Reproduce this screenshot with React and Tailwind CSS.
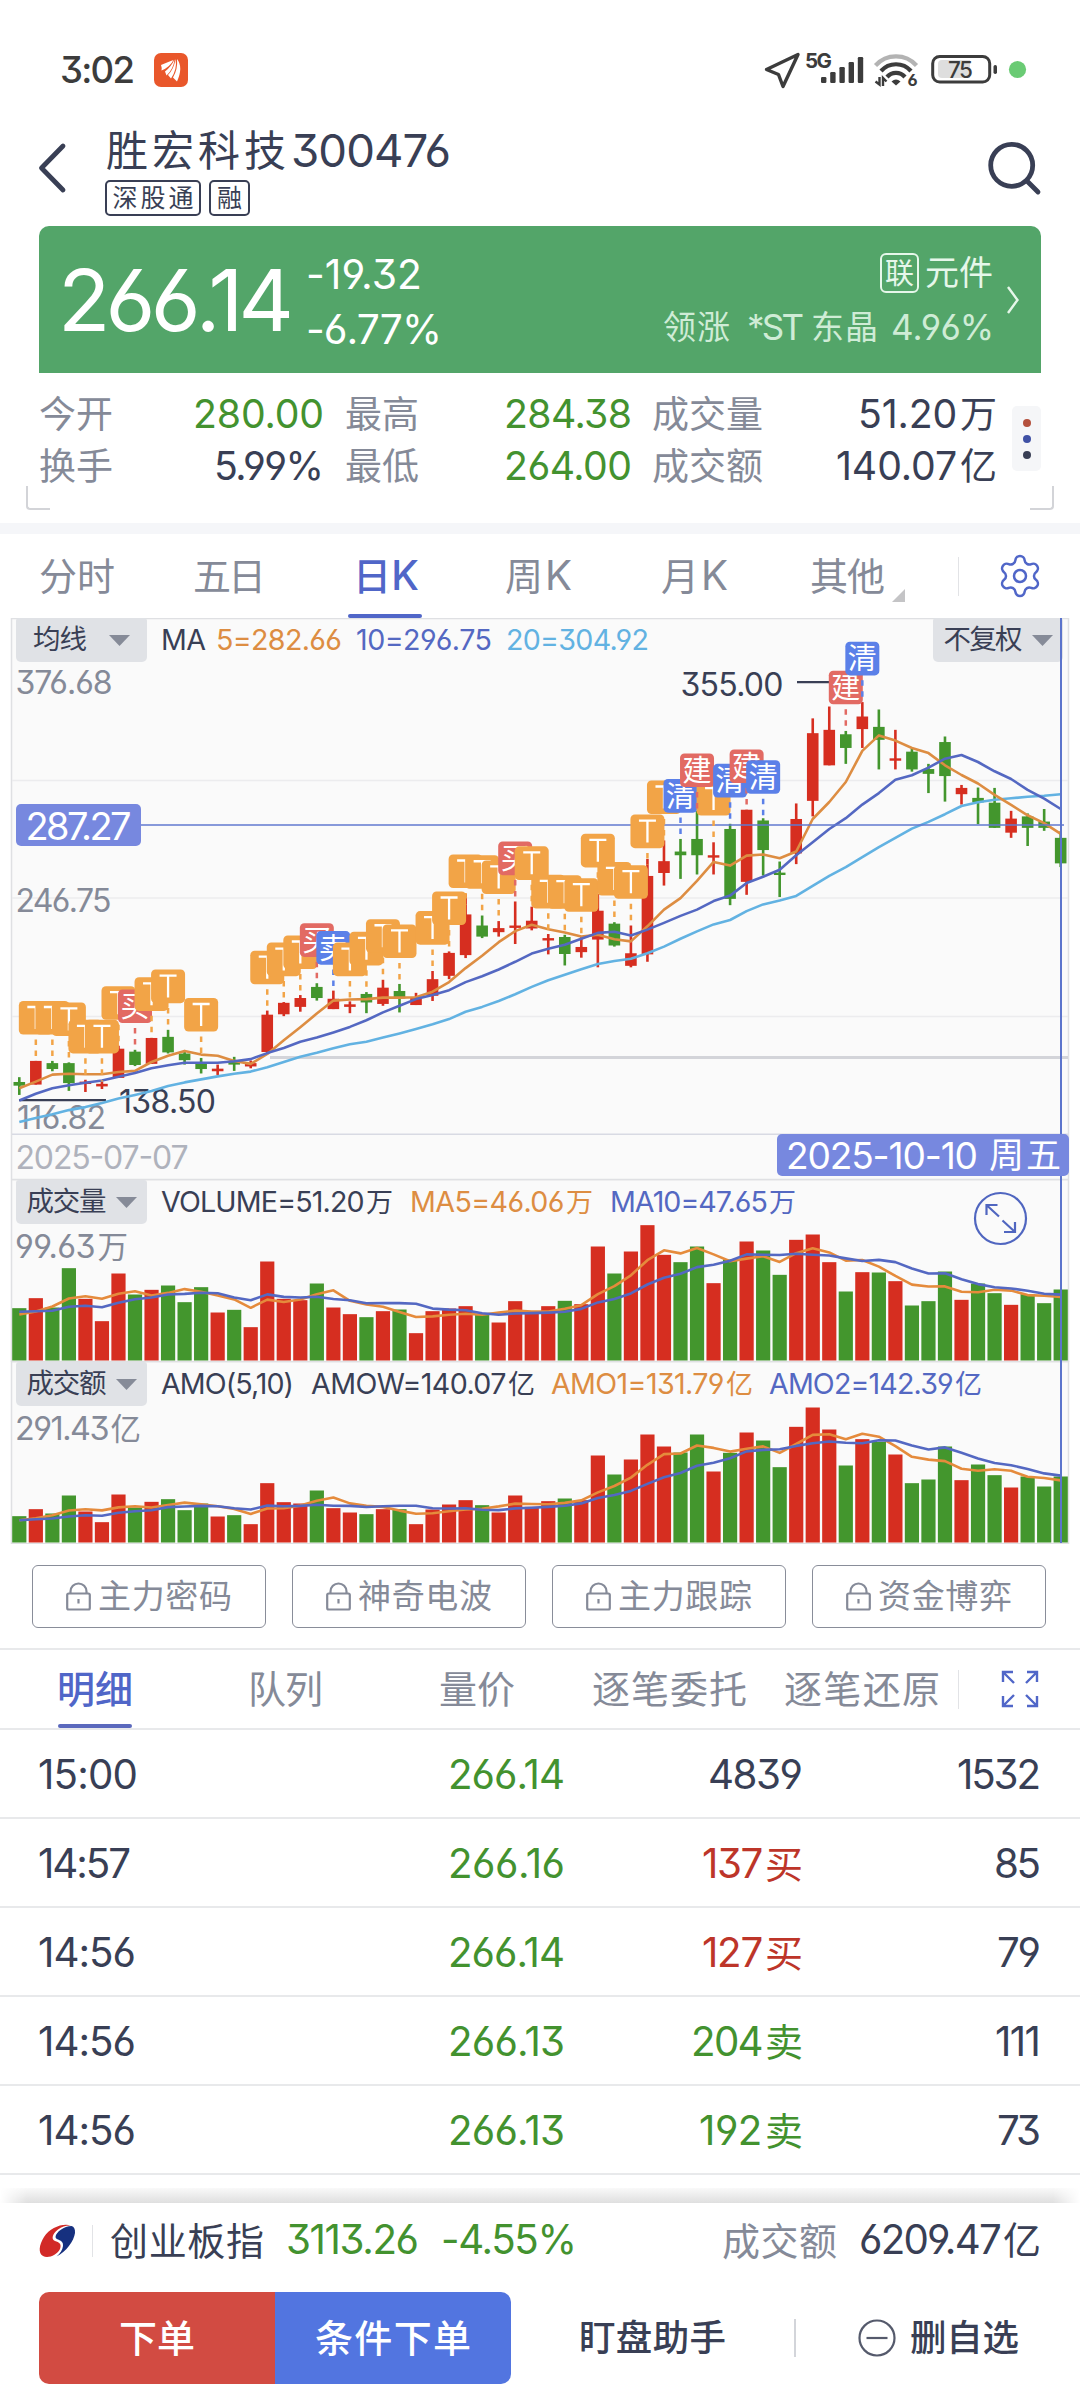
import React, { useLayoutEffect, useRef, useState } from "react";
import { Settings } from "lucide-react";

const RED = "#d62e20";
const GREEN = "#43962d";
const INK = "#393f55";
const ORANGE = "#dd8d42";
const BLUE = "#5468c2";
const CYAN = "#62b2e2";

/* Text whose letter spacing is adjusted so that it fills the given width. */
function T({ w, className = "", children }) {
  const ref = useRef(null);
  const [ls, setLs] = useState(null);
  const text = String(children);
  useLayoutEffect(() => {
    const natural = ref.current.getBoundingClientRect().width;
    setLs((w - natural) / Math.max(1, text.length - 1));
  }, []);
  const runs = text.split(/([\u4e00-\u9fff]+)/).filter(Boolean);
  return (
    <span className={"inline-block shrink-0 whitespace-nowrap leading-none " + className} style={{ width: w }}>
      <span ref={ref} className="inline-block whitespace-pre" style={ls === null ? undefined : { letterSpacing: ls }}>
        {runs.map((r, i) => (
          <span
            key={i}
            className={(/[\u4e00-\u9fff]/.test(r) ? "" : "text-[1.06em] ") + (i > 0 ? "ml-[0.08em]" : "")}
          >
            {r}
          </span>
        ))}
      </span>
    </span>
  );
}

/* [isUp, bodyTop, bodyBottom, high, low] */
const CANDLES = [
  [0, 1303, 1313, 1290, 1338], [1, 1246, 1310, 1246, 1310], [0, 1252, 1268, 1246, 1274], [0, 1252, 1306, 1250, 1327],
  [1, 1302, 1306, 1297, 1330], [1, 1308, 1315, 1302, 1322], [1, 1213, 1292, 1205, 1292], [0, 1221, 1257, 1216, 1260],
  [1, 1184, 1254, 1184, 1254], [0, 1181, 1223, 1162, 1226], [0, 1226, 1244, 1218, 1256], [0, 1253, 1268, 1238, 1280],
  [1, 1267, 1274, 1256, 1284], [0, 1249, 1256, 1235, 1273], [1, 1252, 1261, 1245, 1266], [1, 1121, 1222, 1110, 1226],
  [1, 1089, 1120, 1087, 1125], [1, 1076, 1100, 1068, 1113], [0, 1046, 1076, 1036, 1083], [1, 1078, 1106, 1056, 1106],
  [1, 1093, 1100, 1085, 1117], [0, 1065, 1088, 1060, 1117], [1, 1048, 1092, 1027, 1097], [0, 1057, 1077, 1038, 1115],
  [1, 1075, 1095, 1062, 1095], [1, 1025, 1070, 1003, 1084], [1, 954, 1016, 950, 1025], [1, 850, 960, 795, 968],
  [0, 880, 910, 853, 914], [1, 887, 898, 868, 910], [1, 880, 886, 815, 930], [1, 867, 888, 829, 893],
  [1, 914, 920, 903, 958], [0, 911, 957, 905, 988], [1, 938, 952, 910, 967], [1, 840, 918, 795, 993],
  [0, 875, 934, 871, 937], [1, 955, 989, 880, 993], [1, 746, 958, 700, 978], [1, 706, 738, 650, 772],
  [0, 680, 690, 646, 754], [0, 646, 690, 570, 742], [1, 690, 696, 655, 742], [0, 619, 808, 605, 825],
  [1, 567, 762, 567, 797], [0, 596, 676, 590, 745], [0, 737, 743, 707, 803], [1, 592, 685, 550, 714],
  [1, 360, 543, 320, 585], [1, 351, 447, 288, 447], [0, 363, 400, 354, 443], [1, 315, 349, 276, 400],
  [0, 343, 378, 296, 458], [1, 428, 434, 351, 458], [0, 410, 458, 402, 464], [0, 457, 470, 443, 522],
  [0, 384, 476, 369, 545], [1, 508, 525, 500, 553], [0, 535, 547, 507, 606], [0, 548, 616, 508, 616],
  [1, 591, 629, 570, 643], [0, 585, 616, 577, 665], [0, 599, 616, 565, 624], [0, 643, 712, 625, 722],
];
const MA5 = [1320, 1302, 1283, 1281, 1282, 1282, 1276, 1273, 1249, 1232, 1219, 1229, 1232, 1246, 1254, 1227, 1190, 1155, 1118, 1083, 1080, 1079, 1075, 1075, 1074, 1059, 1033, 995, 962, 925, 895, 878, 890, 899, 910, 905, 917, 923, 882, 837, 806, 759, 708, 718, 691, 688, 698, 680, 592, 546, 492, 408, 366, 380, 400, 414, 447, 473, 496, 527, 554, 582, 603, 632];
const MA10 = [1353, 1335, 1320, 1312, 1305, 1299, 1289, 1279, 1266, 1258, 1251, 1251, 1251, 1247, 1241, 1225, 1211, 1194, 1183, 1169, 1154, 1136, 1115, 1097, 1079, 1068, 1055, 1033, 1017, 999, 978, 956, 943, 932, 916, 900, 897, 907, 891, 873, 854, 837, 814, 799, 765, 748, 729, 690, 655, 619, 590, 553, 522, 486, 474, 453, 429, 419, 438, 463, 484, 513, 537, 565];
const MA20 = [1411, 1400, 1390, 1379, 1371, 1360, 1348, 1338, 1327, 1314, 1304, 1296, 1288, 1281, 1275, 1263, 1249, 1235, 1224, 1212, 1201, 1194, 1183, 1172, 1160, 1147, 1133, 1113, 1100, 1084, 1066, 1046, 1028, 1013, 998, 984, 976, 970, 955, 937, 916, 896, 877, 865, 841, 823, 812, 800, 773, 746, 722, 695, 668, 643, 618, 600, 579, 557, 547, 540, 536, 532, 529, 525];
const MARKERS = [
  [1, "T", 1084], [2, "T", 1084], [3, "T", 1088], [4, "T", 1135], [5, "T", 1135], [6, "T", 1044], [7, "买", 1053],
  [8, "T", 1020], [9, "T", 999], [11, "T", 1076], [15, "T", 948], [16, "T", 926], [17, "T", 907], [18, "买", 874],
  [19, "卖", 895], [20, "T", 926], [21, "T", 897], [22, "T", 863], [23, "T", 877], [25, "T", 841], [26, "T", 788],
  [27, "T", 688], [28, "T", 690], [29, "T", 704], [30, "买", 653], [31, "T", 666], [32, "T", 743], [33, "T", 744],
  [34, "T", 752], [35, "T", 632], [36, "T", 708], [37, "T", 717], [38, "T", 580], [39, "T", 488], [40, "清", 484],
  [42, "T", 492], [41, "建", 415], [43, "清", 443], [44, "建", 404], [45, "清", 433], [50, "建", 191], [51, "清", 113],
];
const MARK_COLOR = { T: "#f2a447", 买: "#e26a63", 建: "#e26a63", 卖: "#5b80e8", 清: "#5b80e8" };

const VOL = [414, 384, 412, 294, 386, 453, 310, 373, 359, 346, 396, 351, 427, 419, 471, 274, 386, 390, 340, 412, 432, 441, 423, 418, 489, 423, 415, 408, 433, 457, 393, 430, 408, 392, 402, 229, 310, 244, 165, 254, 276, 229, 339, 268, 214, 241, 314, 209, 193, 276, 364, 306, 307, 333, 406, 393, 304, 389, 340, 369, 404, 372, 399, 358].map((v) => (571 - v) / 3);
const AMO = [1038, 1017, 1030, 976, 1024, 1056, 973, 1012, 995, 987, 1020, 1000, 1039, 1035, 1062, 939, 996, 1000, 961, 1014, 1027, 1032, 1017, 1017, 1062, 1018, 1003, 990, 1005, 1027, 976, 1010, 993, 985, 990, 856, 913, 868, 793, 829, 847, 793, 904, 848, 787, 811, 891, 770, 712, 778, 886, 807, 815, 853, 939, 928, 829, 930, 883, 915, 952, 919, 949, 919].map((v) => (1117 - v) / 3);
const VOL5 = [46, 49, 54, 62];
const VOL10 = [48.7, 49.3, 49.7, 53.7, 54.7, 53.3, 57.7, 61.3, 63];
const AMO5 = [22.3, 24.3, 27.3, 32];
const AMO10 = [22.3, 23.3, 24, 26, 27.3, 26.7, 29.7, 31.3, 32.3];

const cx = (i) => 19.3 + 16.53 * i;
/* chart units to pixels inside the price panel */
const py = (v) => v / 2.7034 - 18;
const linePoints = (vals, f) => vals.map((v, i) => `${cx(i).toFixed(1)},${f(v).toFixed(1)}`).join(" ");
const average = (vals, n, head) =>
  vals.map((_, i) => (i < head.length ? head[i] : vals.slice(i - n + 1, i + 1).reduce((a, b) => a + b, 0) / n));

function Drop({ w, tw, gap, children }) {
  return (
    <div className="flex h-[44px] items-center justify-center rounded-b-[5px] rounded-t-[3px] bg-[#e0e2e6] text-[27.5px] text-[#393f55]" style={{ width: w, gap }}>
      <T w={tw}>{children}</T>
      <svg width="21" height="11" viewBox="0 0 21 11"><path d="M0 0H21L10.5 11Z" fill="#868b98" /></svg>
    </div>
  );
}

function Label({ x, y, w, size = 32, fill = "#858a98", children }) {
  return (
    <text x={x} y={y} textLength={w} fontSize={size} fill={fill}>{children}</text>
  );
}

function PricePanel() {
  return (
    <section className="relative h-[561px]">
      <svg className="absolute inset-0" width="1080" height="561" viewBox="0 0 1080 561">
        <rect x="11.5" y="0.5" width="1057" height="561" fill="#fafafa" stroke="#dfe0e3" strokeWidth="1.5" />
        {[162.5, 280, 398.5].map((y) => <path key={y} d={`M12 ${y}H1068`} stroke="#ececee" strokeWidth="1.5" />)}
        <path d="M270 439.5H1068" stroke="#d3d4d9" strokeWidth="3" />
        <path d="M12 516.2H1068" stroke="#d8dae3" strokeWidth="1.5" />
        {CANDLES.map(([up, t, b, h, l], i) => {
          const c = up ? RED : GREEN;
          return (
            <g key={i} fill={c}>
              <rect x={cx(i) - 1.3} y={py(h)} width="2.6" height={py(l) - py(h)} />
              <rect x={cx(i) - 5.8} y={py(t)} width="11.6" height={Math.max(2.4, py(b) - py(t))} />
            </g>
          );
        })}
        <path d={`M19 ${py(1352)}H106`} stroke={INK} strokeWidth="2.3" />
        <path d={`M797 ${py(222)}H830`} stroke={INK} strokeWidth="2.3" />
        <Label x="15.5" y="75.5" w="97">376.68</Label>
        <Label x="15.5" y="293.5" w="96">246.75</Label>
        <Label x="17" y="511" w="89">116.82</Label>
        <Label x="119" y="495" w="97" fill={INK}>138.50</Label>
        <Label x="680.5" y="77.5" w="103" fill={INK}>355.00</Label>
        <Label x="15.5" y="551" w="173" fill="#afb2bc">2025-07-07</Label>
        <g fill="none" strokeWidth="2.6" strokeLinejoin="round">
          <polyline points={linePoints(MA20, py)} stroke={CYAN} />
          <polyline points={linePoints(MA5, py)} stroke={ORANGE} />
          <polyline points={linePoints(MA10, py)} stroke={BLUE} />
        </g>
        <path d="M16 207H1064" stroke="#6079cf" strokeWidth="1.6" />
        {MARKERS.map(([i, s, t]) => {
          const c = MARK_COLOR[s];
          const y = py(t);
          return (
            <g key={i}>
              <path d={`M${cx(i)} ${y + 38.5}V${Math.max(y + 50, py(CANDLES[i][3]))}`} stroke={c} strokeWidth="2.5" strokeDasharray="5.5 5.5" />
              <rect x={cx(i) - 17} y={y} width="34" height="33.6" rx="4.5" fill={c} />
              {s === "T" ? (
                <path d={`M${cx(i) - 8.5} ${y + 6}H${cx(i) + 8.5}M${cx(i)} ${y + 6}V${y + 28}`} stroke="#fff" strokeWidth="2.3" fill="none" />
              ) : (
                <text x={cx(i)} y={y + 27.5} fontSize="29" textAnchor="middle" fill="#fff">{s}</text>
              )}
            </g>
          );
        })}
        <rect x="16" y="186" width="125" height="42" rx="5" fill="#7788df" />
        <Label x="25.5" y="221.5" w="106" size={38} fill="#fff">287.27</Label>
      </svg>
      <div className="relative flex items-center pl-[16px] pr-[17px] text-[27px]">
        <Drop w={131} tw={54} gap={22}>均线</Drop>
        <T w={45} className="ml-[14px] text-[#393f55]">MA</T>
        <T w={126} className="ml-[10px] text-[#dd8d42]">5=282.66</T>
        <T w={136} className="ml-[14px] text-[#5468c2]">10=296.75</T>
        <T w={143} className="ml-[14px] text-[#62b2e2]">20=304.92</T>
        <div className="ml-auto"><Drop w={130} tw={79} gap={9}>不复权</Drop></div>
      </div>
    </section>
  );
}

function BarPanel({ values, head5, head10, header, label, labelWidth }) {
  const f = (v) => 181.5 - v;
  return (
    <section className="relative h-[182px]">
      <svg className="absolute inset-0" width="1080" height="183" viewBox="0 0 1080 183">
        <rect x="11.5" y="0.7" width="1057" height="182" fill="#fafafa" stroke="#dfe0e3" strokeWidth="1.5" />
        {values.map((v, i) => (
          <rect key={i} x={cx(i) - 7.1} y={f(v)} width="14.2" height={v} fill={CANDLES[i][0] ? RED : GREEN} />
        ))}
        <g fill="none" strokeWidth="2.6" strokeLinejoin="round">
          <polyline points={linePoints(average(values, 5, head5), f)} stroke="#e58b3c" />
          <polyline points={linePoints(average(values, 10, head10), f)} stroke={BLUE} />
        </g>
      </svg>
      <div className="relative flex items-center pl-[16px] pt-[1px] text-[27px]">{header}</div>
      <div className="relative flex h-[44px] items-center pl-[15px] pt-[2px] text-[30.5px] text-[#858a98]">
        <T w={labelWidth}>{label}</T>
      </div>
    </section>
  );
}

function StatusIcons() {
  return (
    <svg width="270" height="44" viewBox="760 48 270 44" className="ml-auto mr-[50px]">
      <path d="M766.5 69.5 798 54.5 783 86.5 778.5 74.5Z" fill="none" stroke="#3c3c3c" strokeWidth="3.4" strokeLinejoin="round" />
      <text x="805" y="68" fontSize="20.5" fontWeight="700" fill="#3c3c3c" textLength="27">5G</text>
      {[6, 11, 16, 21, 26].map((h, i) => (
        <rect key={h} x={821 + i * 9.2} y={83 - h} width="5.4" height={h} rx="1.2" fill="#3c3c3c" />
      ))}
      <g fill="none" strokeWidth="4.2">
        <path d="M875.5 65.5A27.5 27.5 0 0 1 916.5 65.5" stroke="#b3b3b3" />
        <path d="M881 71A20 20 0 0 1 911 71" stroke="#3c3c3c" />
        <path d="M887 77A12 12 0 0 1 905 77" stroke="#3c3c3c" />
      </g>
      <path d="M891.5 81.5Q896 77.500 900.5 81.5L896 85.5Z" fill="#3c3c3c" />
      <path d="M879.5 77V84.5L875.5 81.5M883 86V78L886.5 81.5" fill="none" stroke="#3c3c3c" strokeWidth="2.4" />
      <text x="907.5" y="86" fontSize="16.5" fontWeight="700" fill="#3c3c3c">6</text>
      <rect x="932.7" y="56.5" width="57" height="25.5" rx="7" fill="#fff" stroke="#3c3c3c" strokeWidth="3" />
      <path d="M942 60H970V78H942Q938 78 938 74V64Q938 60 942 60Z" fill="#dedede" />
      <text x="948" y="77.5" fontSize="22.5" fontWeight="500" fill="#3c3c3c" textLength="25">75</text>
      <rect x="993.5" y="65" width="3.5" height="9" rx="1.7" fill="#3c3c3c" />
      <circle cx="1017.5" cy="69.5" r="8.6" fill="#6acb74" />
    </svg>
  );
}

function Stat({ label, lw, value, vw, green }) {
  return (
    <div className="flex h-[52px] items-center justify-between">
      <T w={lw} className="text-[#858a98]">{label}</T>
      <T w={vw} className={green ? "text-[#43922f]" : "text-[#393f55]"}>{value}</T>
    </div>
  );
}

function Lock() {
  return (
    <svg width="25" height="29" viewBox="0 0 25 29" fill="none" stroke="#858a98" strokeWidth="2.2">
      <rect x="1.2" y="11.5" width="22.6" height="16" rx="1.5" />
      <path d="M4.5 11.5V9.5A8 8 0 0 1 20.5 9.5V11.5M12.5 17V21.5" />
    </svg>
  );
}

const TRADES = [
  ["15:00", 100, "266.14", 117, "4839", 95, "1532", 84, "text-[#393f55]"],
  ["14:57", 93, "266.16", 117, "137买", 101, "85", 47, "text-[#bd3529]"],
  ["14:56", 98, "266.14", 117, "127买", 101, "79", 44, "text-[#bd3529]"],
  ["14:56", 98, "266.13", 117, "204卖", 112, "111", 46, "text-[#43922f]"],
  ["14:56", 98, "266.13", 117, "192卖", 104, "73", 44, "text-[#43922f]"],
];

export default function App() {
  return (
    <div
      className="relative h-[2400px] w-[1080px] overflow-hidden bg-white text-[#393f55] [font-feature-settings:'cv03','cv04','cv09']"
      style={{ fontFamily: '"Inter", "Noto Sans CJK SC", sans-serif' }}
    >
      <div className="flex h-[100px] items-center pl-[60px] pt-[40px]">
        <T w={75} className="text-[34.5px] font-medium text-[#3c3c3c]">3:02</T>
        <svg width="34" height="34" viewBox="0 0 34 34" className="ml-[19px]">
          <rect width="34" height="34" rx="7" fill="#e9572b" />
          <path d="M7 12Q14 9 19.5 7Q16 14 7.5 17.5Q8 14.5 7 12Z M20.5 6.5Q19.5 16 12.5 22.5L11 18.5Q17 14 20.5 6.5Z M21.5 6Q23.5 16 17 25.5L14 22Q20 16 21.5 6Z M23 6Q29.5 14 23 28.5L19 24.5Q24 16 23 6Z" fill="#fff" />
        </svg>
        <StatusIcons />
      </div>

      <header className="flex h-[126px] pl-[37px]">
        <svg width="30" height="54" viewBox="0 0 30 54" className="mt-[41px]">
          <path d="M26 5 4.5 27 26 49" fill="none" stroke={INK} strokeWidth="4.8" strokeLinecap="round" strokeLinejoin="round" />
        </svg>
        <div className="ml-[38px] pt-[28px]">
          <div className="flex h-[45px] items-center">
            <T w={180} className="ml-[1px] text-[42px]">胜宏科技</T>
            <T w={160} className="ml-[5px] text-[43px]">300476</T>
          </div>
          <div className="mt-[7px] flex gap-[8px] text-[25px]">
            <div className="flex h-[36px] w-[96px] items-center justify-center rounded-[5px] border-2 border-[#393f55]"><T w={81}>深股通</T></div>
            <div className="flex h-[36px] w-[41px] items-center justify-center rounded-[5px] border-2 border-[#393f55]"><T w={25}>融</T></div>
          </div>
        </div>
        <svg width="56" height="56" viewBox="0 0 56 56" className="ml-auto mr-[36px] mt-[40px]">
          <g fill="none" stroke={INK} strokeWidth="4.8" strokeLinecap="round">
            <circle cx="23.7" cy="25.3" r="21" /><path d="M39 41 50 52" />
          </g>
        </svg>
      </header>

      <div className="mx-[39px] flex h-[147px] items-center rounded-t-[10px] bg-[#53a569] text-white">
        <T w={236} className="ml-[19px] pt-[2px] text-[81px]">266.14</T>
        <div className="ml-[12px] flex flex-col gap-[14px] pt-[4px] text-[38.5px]">
          <T w={116}>-19.32</T>
          <T w={136}>-6.77%</T>
        </div>
        <div className="ml-auto flex flex-col items-end gap-[14px] pt-[1px]">
          <div className="flex items-center text-[34px] text-[#e6f7ea]">
            <div className="flex h-[40px] w-[39px] items-center justify-center rounded-[6px] border-2 border-[#e6f7ea] text-[29px]"><T w={29}>联</T></div>
            <T w={68} className="ml-[6px] mr-[1px]">元件</T>
          </div>
          <div className="flex h-[40px] items-center text-[33px] text-[#cfecd6]">
            <T w={67}>领涨</T>
            <T w={57} className="ml-[17px]">*ST</T>
            <T w={67} className="ml-[7px]">东晶</T>
            <T w={103} className="ml-[13px]">4.96%</T>
          </div>
        </div>
        <svg width="14" height="30" viewBox="0 0 14 30" className="ml-[12px] mr-[21px]"><path d="M2 2 11.5 15 2 28" fill="none" stroke="#e6f7ea" strokeWidth="2.4" /></svg>
      </div>

      <div className="relative flex h-[150px] pl-[39px] pt-[15px] text-[37px]">
        <div className="w-[285px]">
          <Stat label="今开" lw={74} value="280.00" vw={131} green />
          <Stat label="换手" lw={74} value="5.99%" vw={110} />
        </div>
        <div className="ml-[21px] w-[287px]">
          <Stat label="最高" lw={74} value="284.38" vw={128} green />
          <Stat label="最低" lw={74} value="264.00" vw={128} green />
        </div>
        <div className="ml-[20px] w-[345px]">
          <Stat label="成交量" lw={111} value="51.20万" vw={139} />
          <Stat label="成交额" lw={111} value="140.07亿" vw={161} />
        </div>
        <div className="ml-[15px] mt-[18px] flex h-[65px] w-[29px] flex-col items-center justify-center gap-[8px] rounded-[5px] bg-[#f5f6f8]">
          <i className="size-[8px] rounded-full bg-[#b4513d]" />
          <i className="size-[8px] rounded-full bg-[#3f51a5]" />
          <i className="size-[8px] rounded-full bg-[#393f55]" />
        </div>
        <i className="absolute left-[26px] top-[113px] h-[24px] w-[24px] rounded-bl-[4px] border-b-2 border-l-2 border-[#d3d4d8]" />
        <i className="absolute right-[26px] top-[113px] h-[24px] w-[24px] rounded-br-[4px] border-b-2 border-r-2 border-[#d3d4d8]" />
      </div>
      <div className="h-[11px] bg-[#f5f6f9]" />

      <nav className="flex h-[84px] items-center pl-[39px] text-[38px] text-[#858a98]">
        <T w={76}>分时</T>
        <T w={73} className="ml-[78px]">五日</T>
        <div className="relative ml-[87px] flex h-full items-center font-medium text-[#5066c8]">
          <T w={66}>日K</T>
          <i className="absolute -left-[5px] bottom-0 h-[4px] w-[74px] rounded-full bg-[#5066c8]" />
        </div>
        <T w={67} className="ml-[86px]">周K</T>
        <T w={67} className="ml-[89px]">月K</T>
        <T w={75} className="ml-[82px]">其他</T>
        <svg width="13" height="13" viewBox="0 0 13 13" className="ml-[7px] mt-[39px]"><path d="M13 0V13H0Z" fill="#c4c4c6" /></svg>
        <i className="ml-[53px] h-[39px] w-px bg-[#e2e3e6]" />
        <Settings size={48} strokeWidth={1.25} className="ml-[37px] text-[#5066c8]" />
      </nav>

      <div className="relative">
        <PricePanel />
        <BarPanel
          values={VOL} head5={VOL5} head10={VOL10} label="99.63万" labelWidth={113}
          header={<>
            <Drop w={131} tw={80} gap={9}>成交量</Drop>
            <T w={232} className="ml-[14px]">VOLUME=51.20万</T>
            <T w={183} className="ml-[17px] text-[#dd8d42]">MA5=46.06万</T>
            <T w={186} className="ml-[17px] text-[#5468c2]">MA10=47.65万</T>
          </>}
        />
        <BarPanel
          values={AMO} head5={AMO5} head10={AMO10} label="291.43亿" labelWidth={126}
          header={<>
            <Drop w={131} tw={80} gap={9}>成交额</Drop>
            <T w={133} className="ml-[14px]">AMO(5,10)</T>
            <T w={224} className="ml-[17px]">AMOW=140.07亿</T>
            <T w={202} className="ml-[16px] text-[#dd8d42]">AMO1=131.79亿</T>
            <T w={213} className="ml-[16px] text-[#5468c2]">AMO2=142.39亿</T>
          </>}
        />
        <i className="absolute left-[1060px] top-0 h-[925px] w-[1.5px] bg-[#5b74cc]" />
        <div className="absolute left-[777px] top-[516px] flex h-[42px] w-[292px] items-center rounded-[5px] bg-[#7788df] pl-[9px] pt-[1px] text-[35px] text-white">
          <T w={192}>2025-10-10</T>
          <T w={72} className="ml-[11px]">周五</T>
        </div>
        <svg className="absolute left-[973px] top-[573px]" width="55" height="55" viewBox="0 0 55 55" fill="none" stroke="#5066c0" strokeWidth="2.2">
          <circle cx="27.5" cy="27.5" r="25.5" />
          <path d="M13.5 24V14H24.5M14 14.5 26 25.5M42 31V41H31M41.5 40.5 29.5 29.5" />
        </svg>
      </div>

      <div className="mt-[22px] flex gap-[26px] pl-[32px] text-[33px] text-[#858a98]">
        {["主力密码", "神奇电波", "主力跟踪", "资金博弈"].map((s) => (
          <div key={s} className="flex h-[63px] w-[234px] items-center justify-center gap-[7px] rounded-[6px] border-[1.5px] border-[#898d99]">
            <Lock />
            <T w={134}>{s}</T>
          </div>
        ))}
      </div>

      <nav className="mt-[20px] flex h-[82px] items-center border-y-2 border-[#e8e9eb] pl-[57px] text-[38px] text-[#858a98]">
        <div className="relative flex h-full items-center font-medium text-[#5066c8]">
          <T w={76}>明细</T>
          <i className="absolute bottom-0 left-[1px] h-[4px] w-[74px] rounded-full bg-[#5b69bd]" />
        </div>
        <T w={75} className="ml-[115px]">队列</T>
        <T w={76} className="ml-[116px]">量价</T>
        <T w={155} className="ml-[77px]">逐笔委托</T>
        <T w={156} className="ml-[37px]">逐笔还原</T>
        <i className="ml-[18px] h-[39px] w-px bg-[#e2e3e6]" />
        <svg width="38" height="38" viewBox="0 0 38 38" className="ml-[42px]" fill="none" stroke="#5066c8" strokeWidth="2.4">
          <path d="M2 12V2H12M2 2 13 13M26 2H36V12M36 2 25 13M2 26V36H12M2 36 13 25M26 36H36V26M36 36 25 25" />
        </svg>
      </nav>

      {TRADES.map(([t, tw, p, pw, v, vw, n, nw, c], i) => (
        <div key={i} className="flex h-[89px] items-center border-b-2 border-[#e8e9eb] pl-[38px] pr-[39px] pt-[4px] text-[38px]">
          <div className="w-[301px]"><T w={tw}>{t}</T></div>
          <div className="flex w-[226px] justify-end text-[#43922f]"><T w={pw}>{p}</T></div>
          <div className={"flex w-[238px] justify-end " + c}><T w={vw}>{v}</T></div>
          <div className="flex flex-1 justify-end"><T w={nw}>{n}</T></div>
        </div>
      ))}

      <div className="mt-[13px] h-[15px] bg-linear-to-b from-[#f9f9f9] to-[#dfdfdf] [mask-image:linear-gradient(90deg,transparent,#000_2.5%,#000_97.5%,transparent)]" />
      <div className="flex h-[77px] items-center pb-[2px] pl-[38px] text-[38px]">
        <svg width="38" height="36" viewBox="0 0 38 36">
          <path d="M33 2.5C24 0 12 5 6 14C1 22 0 30 5 33C10 36 19 32 22 26C24 21 21 19 17 18C13 16.5 14 11 20 6.5C24 3.5 29 2 33 2.5Z" fill="#d22a27" />
          <path d="M33.5 3C26 3 18 9 17.5 14C17.5 17.5 26 16 25 23C24.5 27 22 30.5 18.5 33.5C28 29 36 18 37 10C37.3 6 36 3.5 33.5 3Z" fill="#16307f" />
        </svg>
        <i className="ml-[16px] h-[32px] w-px bg-[#e2e3e6]" />
        <T w={154} className="ml-[17px]">创业板指</T>
        <T w={133} className="ml-[22px] text-[#43922f]">3113.26</T>
        <T w={136} className="ml-[22px] text-[#43922f]">-4.55%</T>
        <T w={115} className="ml-[145px] text-[#858a98]">成交额</T>
        <T w={182} className="ml-[22px]">6209.47亿</T>
      </div>
      <div className="mt-[12px] flex h-[92px] items-center pl-[39px] text-[38px] font-medium">
        <div className="flex h-full w-[236px] items-center justify-center rounded-l-[10px] bg-[#d24b42] text-white"><T w={76}>下单</T></div>
        <div className="flex h-full w-[236px] items-center justify-center rounded-r-[10px] bg-[#5275e0] text-white"><T w={156}>条件下单</T></div>
        <T w={147} className="ml-[68px] text-[36.5px]">盯盘助手</T>
        <i className="ml-[68px] h-[38px] w-[2px] bg-[#d3d5da]" />
        <svg width="38" height="38" viewBox="0 0 38 38" className="ml-[62px]" fill="none" stroke="#555a6c" strokeWidth="2.2">
          <circle cx="19" cy="19" r="17.5" /><path d="M8.5 19H29.5" />
        </svg>
        <T w={109} className="ml-[14px] text-[36.5px]">删自选</T>
      </div>
    </div>
  );
}
